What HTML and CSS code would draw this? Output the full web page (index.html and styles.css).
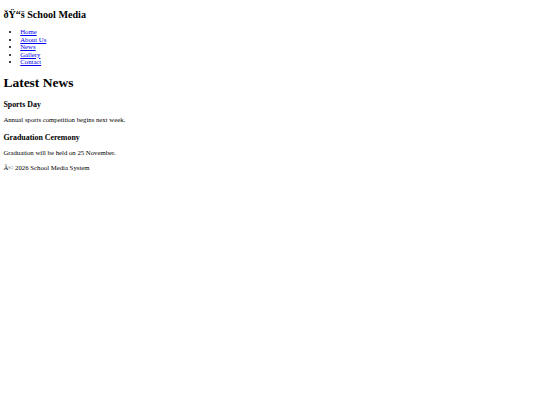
FILE: index.html
```html
<!DOCTYPE html>
<html>
<head>
<meta charset="utf-8">
<title>School Media</title>
<link rel="stylesheet" href="styles.css">
</head>
<body class="page">
<header class="site-header">
<h2 class="site-title">ðŸ“š School Media</h2>
<nav class="site-nav">
<ul class="nav-list">
<li class="nav-item"><a class="nav-link" href="#">Home</a></li>
<li class="nav-item"><a class="nav-link" href="#">About Us</a></li>
<li class="nav-item"><a class="nav-link" href="#">News</a></li>
<li class="nav-item"><a class="nav-link" href="#">Gallery</a></li>
<li class="nav-item"><a class="nav-link" href="#">Contact</a></li>
</ul>
</nav>
</header>
<main class="content">
<h1 class="section-title">Latest News</h1>
<article class="news">
<h3 class="news-title">Sports Day</h3>
<p class="news-text">Annual sports competition begins next week.</p>
</article>
<article class="news">
<h3 class="news-title">Graduation Ceremony</h3>
<p class="news-text">Graduation will be held on 25 November.</p>
</article>
</main>
<footer class="site-footer">
<p class="footer-text">Â© 2026 School Media System</p>
</footer>
</body>
</html>
```
FILE: styles.css
```css
html {
  background: #ffffff;
}
.page {
  margin: 3.375px;
  font-family: "Liberation Serif", "Times New Roman", serif;
  font-size: 6.75px;
  line-height: 1.12;
  color: #000000;
}
.site-title {
  font-size: 10.125px;
  font-weight: bold;
  margin: 5.2px 0 8.2px;
}
.nav-list {
  margin: 6.75px 0;
  padding-left: 16.875px;
  list-style: disc;
}
.nav-item {
  line-height: 7.5px;
}
.nav-link {
  color: #0000ee;
  text-decoration: underline;
}
.section-title {
  font-size: 13.5px;
  font-weight: bold;
  margin: 9.05px 0 11px;
}
.news-title {
  font-size: 7.9px;
  font-weight: bold;
  margin: 10px 0 6.75px;
}
.news-text {
  margin: 6.75px 0;
}
.footer-text {
  margin: 6.75px 0;
}
```
